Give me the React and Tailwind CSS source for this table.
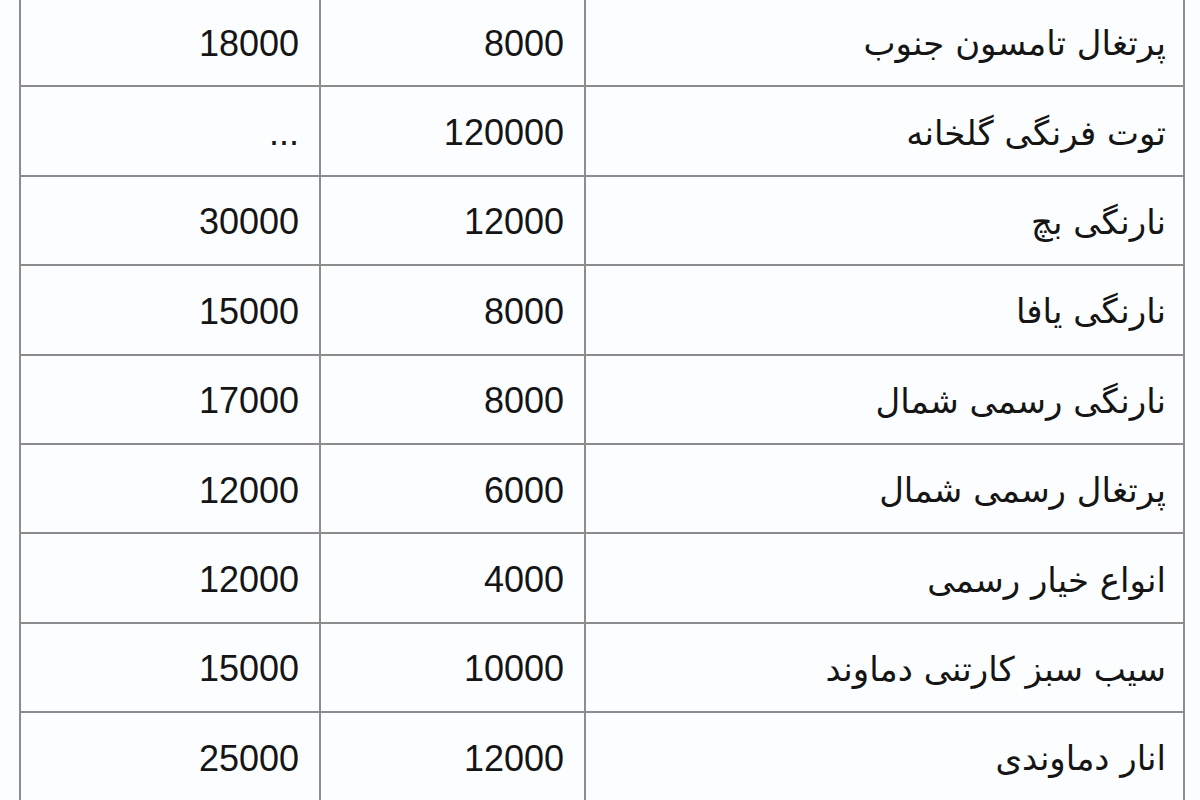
const rows = [
    ['پرتغال تامسون جنوب', '8000', '18000'],
    ['توت فرنگی گلخانه', '120000', '...'],
    ['نارنگی بچ', '12000', '30000'],
    ['نارنگی یافا', '8000', '15000'],
    ['نارنگی رسمی شمال', '8000', '17000'],
    ['پرتغال رسمی شمال', '6000', '12000'],
    ['انواع خیار رسمی', '4000', '12000'],
    ['سیب سبز کارتنی دماوند', '10000', '15000'],
    ['انار دماوندی', '12000', '25000'],
];

const App = () => {
    return (
        <div className="w-[1200px] h-[800px] overflow-hidden bg-[#fcfdff] font-['Liberation_Sans','DejaVu_Sans',sans-serif] text-[#151515]">
            <table dir="rtl" className="ml-[19px] -mt-[4px] w-[1164px] border-collapse table-fixed">
                <colgroup>
                    <col className="w-[599px]" />
                    <col className="w-[265px]" />
                    <col className="w-[300px]" />
                </colgroup>
                <tbody>
                    {rows.map((r, i) => (
                        <tr key={i} className="h-[89.4px]">
                            <td className="border-2 border-[#8c8c8c] pr-[17px] pt-[4px] text-right text-[34px] font-['DejaVu_Sans',sans-serif]">{r[0]}</td>
                            <td className="border-2 border-[#8c8c8c] pr-[20px] pt-[4px] text-right text-[36px]">{r[1]}</td>
                            <td className="border-2 border-[#8c8c8c] pr-[20px] pt-[4px] text-right text-[36px]">{r[2]}</td>
                        </tr>
                    ))}
                </tbody>
            </table>
        </div>
    );
};

export default App;
